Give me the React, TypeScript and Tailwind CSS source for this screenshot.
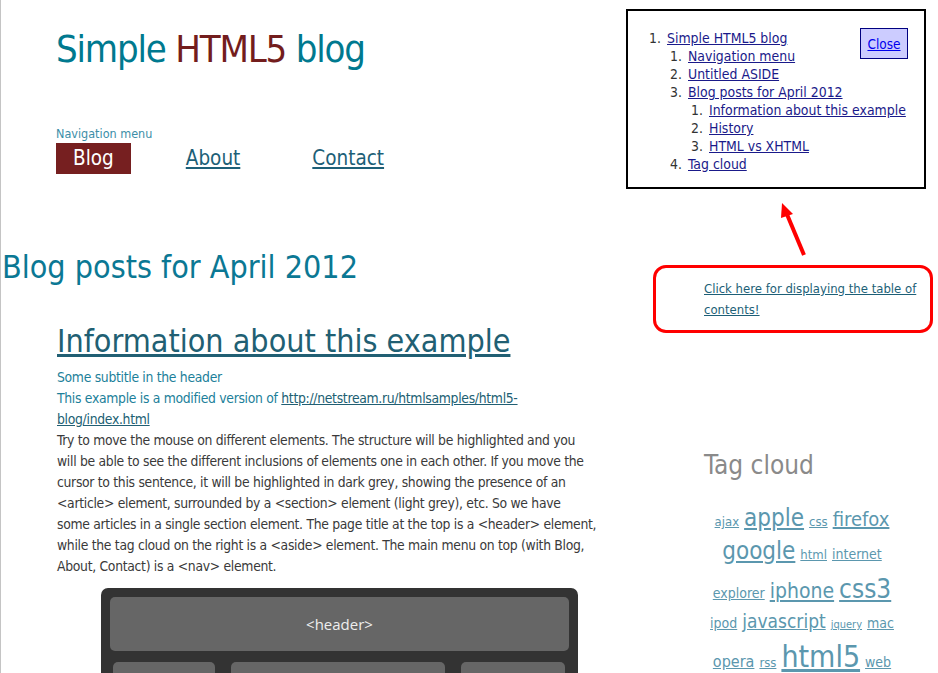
import React from "react";

const font = { fontFamily: '"DejaVu Sans Condensed", "DejaVu Sans", sans-serif' };

const tags: { row: { t: string; s: number }[]; mt: number; h: number }[] = [
  {
    mt: 0,
    h: 24,
    row: [
      { t: "ajax", s: 13 },
      { t: "apple", s: 24 },
      { t: "css", s: 13 },
      { t: "firefox", s: 20 },
    ],
  },
  {
    mt: 9,
    h: 24,
    row: [
      { t: "google", s: 24 },
      { t: "html", s: 13 },
      { t: "internet", s: 14 },
    ],
  },
  {
    mt: 13,
    h: 26,
    row: [
      { t: "explorer", s: 14 },
      { t: "iphone", s: 21 },
      { t: "css3", s: 26 },
    ],
  },
  {
    mt: 10,
    h: 19,
    row: [
      { t: "ipod", s: 14 },
      { t: "javascript", s: 19 },
      { t: "jquery", s: 11 },
      { t: "mac", s: 14 },
    ],
  },
  {
    mt: 11,
    h: 30,
    row: [
      { t: "opera", s: 16 },
      { t: "rss", s: 13 },
      { t: "html5", s: 30 },
      { t: "web", s: 14 },
    ],
  },
];

function Num({ n }: { n: number }) {
  return <span className="w-[21px] shrink-0 pr-[6px] text-right">{n}.</span>;
}

function TocLink({ children }: { children: React.ReactNode }) {
  return <a className="text-[#1a1a8a] underline">{children}</a>;
}

export default function App() {
  return (
    <div
      className="relative min-h-[673px] w-[938px] overflow-hidden border-l border-[#c4c4c4] bg-white"
      style={font}
    >
      <div className="flex">
        {/* Main column */}
        <div className="w-[652px] shrink-0">
          <header className="pl-[55px] pt-[26px]">
            <h1 className="text-[38px] leading-[46px] tracking-[-1.2px] text-[#00798f]">
              Simple <span className="text-[#731d1d]">HTML5</span> blog
            </h1>
          </header>
          <nav className="mt-[53px] pl-[55px]">
            <div className="text-[12.5px] leading-[17px] text-[#3c8ea8]">Navigation menu</div>
            <ul className="mt-[1px] flex items-center">
              <li className="bg-[#761f20] px-[17px] text-[20.5px] leading-[31px] text-white">Blog</li>
              <li className="ml-[38px] px-[17px] text-[20.5px] leading-[31px]">
                <a className="text-[#1d5f77] underline">About</a>
              </li>
              <li className="ml-[38px] px-[17px] text-[20.5px] leading-[31px]">
                <a className="text-[#1d5f77] underline">Contact</a>
              </li>
            </ul>
          </nav>
          <section className="mt-[73px] pl-[1px]">
            <h2 className="text-[32px] leading-[40px] text-[#0b7894]">Blog posts for April 2012</h2>
            <article className="mt-[33px] pl-[55px]">
              <h3 className="text-[32px] leading-[42px] text-[#215f73] underline">
                Information about this example
              </h3>
              <div className="mt-[5px] whitespace-nowrap text-[13.8px] leading-[21px] tracking-[-0.3px] text-[#1c7f9a]">
                <p>Some subtitle in the header</p>
                <p>
                  This example is a modified version of{" "}
                  <a className="text-[#215f73] underline">
                    http://netstream.ru/htmlsamples/html5-
                    <br />
                    blog/index.html
                  </a>
                </p>
              </div>
              <p className="whitespace-nowrap text-[13.8px] leading-[21px] tracking-[-0.3px] text-[#3a3a3a]">
                Try to move the mouse on different elements. The structure will be highlighted and you
                <br />
                will be able to see the different inclusions of elements one in each other. If you move the
                <br />
                cursor to this sentence, it will be highlighted in dark grey, showing the presence of an
                <br />
                &lt;article&gt; element, surrounded by a &lt;section&gt; element (light grey), etc. So we have
                <br />
                some articles in a single section element. The page title at the top is a &lt;header&gt; element,
                <br />
                while the tag cloud on the right is a &lt;aside&gt; element. The main menu on top (with Blog,
                <br />
                About, Contact) is a &lt;nav&gt; element.
              </p>
              <div className="ml-[44px] mt-[11px] w-[477px] rounded-[7px] bg-[#333333] px-[9px] pb-[20px] pt-[9px]">
                <div
                  className="flex h-[54px] items-center justify-center rounded-[5px] bg-[#666666] text-[15px] text-[#eeeeee]"
                  style={{ fontFamily: '"Open Sans", "DejaVu Sans", sans-serif' }}
                >
                  &lt;header&gt;
                </div>
                <div className="mt-[11px] flex gap-[16px] px-[3px]">
                  <div className="h-[60px] w-[102px] rounded-[5px] bg-[#666666]" />
                  <div
                    className="flex h-[60px] w-[214px] justify-center rounded-[5px] bg-[#666666] pt-[6px] text-[15px] leading-[20px] text-[#eeeeee]"
                    style={{ fontFamily: '"Open Sans", "DejaVu Sans", sans-serif' }}
                  >
                    &lt;section&gt;
                  </div>
                  <div className="h-[60px] w-[104px] rounded-[5px] bg-[#666666]" />
                </div>
              </div>
            </article>
          </section>
        </div>

        {/* Aside */}
        <aside className="w-[280px] shrink-0 pt-[265px]">
          <div className="whitespace-nowrap rounded-[13px] border-[3px] border-[#ff0000] py-[10px] pl-[48px] pr-[6px] text-[13px] leading-[21px]">
            <a className="text-[#1d5f77] underline">
              Click here for displaying the table of
              <br />
              contents!
            </a>
          </div>
          <div className="pl-[51px]">
            <h2 className="mt-[116px] text-[26px] leading-[32px] text-[#8a8a8a]">Tag cloud</h2>
            <div className="mt-[25px] flex w-[196px] flex-col text-[#5b97ae]">
              {tags.map((line, i) => (
                <div
                  key={i}
                  className="flex items-baseline justify-center gap-x-[5px]"
                  style={{ marginTop: line.mt, height: line.h }}
                >
                  {line.row.map((tag) => (
                    <a key={tag.t} className="leading-none underline" style={{ fontSize: tag.s }}>
                      {tag.t}
                    </a>
                  ))}
                </div>
              ))}
            </div>
          </div>
        </aside>
      </div>

      {/* TOC popup */}
      <div className="absolute left-[625px] top-[9px] h-[180px] w-[300px] border-2 border-black bg-white text-[13.9px] leading-[18px]">
        <button className="absolute right-[16px] top-[17px] h-[31px] w-[48px] border border-[#000080] bg-[#ccccff] text-[13.5px] text-[#0000ee] underline">
          Close
        </button>
        <ol className="ml-[19px] mt-[18px] text-[#333333]">
          <li className="-ml-[1px] flex">
            <Num n={1} />
            <div>
              <TocLink>Simple HTML5 blog</TocLink>
              <ol>
                <li className="flex">
                  <Num n={1} />
                  <TocLink>Navigation menu</TocLink>
                </li>
                <li className="flex">
                  <Num n={2} />
                  <TocLink>Untitled ASIDE</TocLink>
                </li>
                <li className="flex">
                  <Num n={3} />
                  <div>
                    <TocLink>Blog posts for April 2012</TocLink>
                    <ol>
                      <li className="flex">
                        <Num n={1} />
                        <TocLink>Information about this example</TocLink>
                      </li>
                      <li className="flex">
                        <Num n={2} />
                        <TocLink>History</TocLink>
                      </li>
                      <li className="flex">
                        <Num n={3} />
                        <TocLink>HTML vs XHTML</TocLink>
                      </li>
                    </ol>
                  </div>
                </li>
                <li className="flex">
                  <Num n={4} />
                  <TocLink>Tag cloud</TocLink>
                </li>
              </ol>
            </div>
          </li>
        </ol>
      </div>

      {/* Red arrow annotation */}
      <svg className="absolute left-[770px] top-[196px]" width="44" height="64" viewBox="0 0 44 64">
        <line x1="33" y1="59" x2="15" y2="16" stroke="#ff0000" strokeWidth="4" />
        <polygon points="11,7 22,18 10,22" fill="#ff0000" />
      </svg>
    </div>
  );
}
